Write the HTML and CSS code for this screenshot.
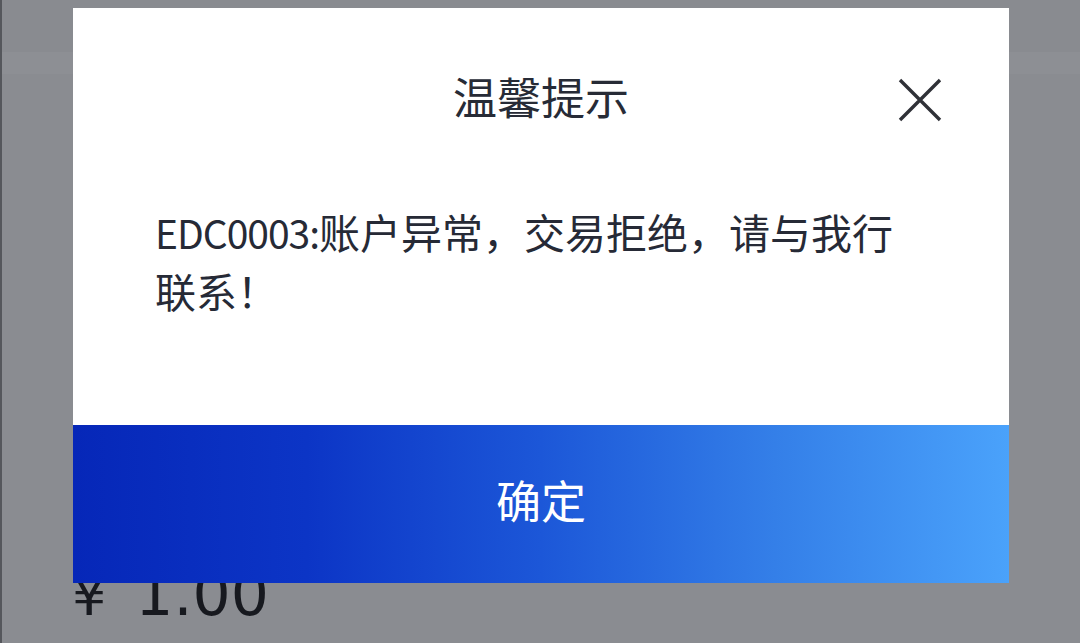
FILE: index.html
```html
<!DOCTYPE html>
<html lang="zh-CN">
<head>
<meta charset="utf-8">
<title>温馨提示</title>
<link rel="stylesheet" href="styles.css">
</head>
<body>
<div class="page">
  <div class="topbar"></div>
  <div class="amount"><span class="yen">¥</span><span class="num">1.00</span></div>
</div>
<div class="mask">
  <div class="dialog">
    <div class="dialog-head">
      <span></span>
      <h1 class="dialog-title">温馨提示</h1>
      <button class="dialog-close" aria-label="关闭">
        <svg width="44" height="44" viewBox="0 0 44 44"><path d="M2 2 L42 42 M42 2 L2 42" stroke="#2f3137" stroke-width="3.4" fill="none" stroke-linecap="butt"/></svg>
      </button>
    </div>
    <div class="dialog-body"><span class="code">EDC0003:</span>账户异常，交易拒绝，请与我行联系！</div>
    <button class="dialog-ok">确定</button>
  </div>
</div>
</body>
</html>
```

FILE: styles.css
```css
html, body {
  margin: 0;
  padding: 0;
}
body {
  width: 1080px;
  height: 643px;
  overflow: hidden;
  background: #8a8c91;
  font-family: "Noto Sans CJK SC", "Noto Sans", sans-serif;
  position: relative;
}
.page {
  height: 643px;
  border-left: 2px solid #55575c;
  box-sizing: border-box;
}
.topbar {
  height: 52px;
  border-bottom: 22px solid #8d8f94;
  background: #898b90;
}
.amount {
  margin-top: 490px;
  padding-left: 70px;
  height: 60px;
  line-height: 60px;
  font-family: "DejaVu Sans", sans-serif;
  font-size: 60px;
  color: #17191f;
  display: flex;
  align-items: baseline;
}
.yen {
  font-size: 54px;
  margin-right: 29px;
}
.num {
  font-weight: 400;
}
.mask {
  position: absolute;
  left: 0;
  top: 0;
  width: 1080px;
  height: 643px;
}
.dialog {
  margin: 8px 0 0 73px;
  width: 936px;
  height: 575px;
  background: #ffffff;
  display: flex;
  flex-direction: column;
}
.dialog-head {
  height: 182px;
  display: grid;
  grid-template-columns: 1fr auto 1fr;
  align-items: center;
}
.dialog-title {
  margin: 0 0 6px;
  font-size: 44px;
  font-weight: 400;
  color: #272b36;
  line-height: 1;
}
.dialog-close {
  justify-self: end;
  margin-right: 67px;
  margin-top: 2px;
  padding: 0;
  border: 0;
  background: none;
  width: 44px;
  height: 44px;
  display: flex;
}
.dialog-body {
  flex: 1;
  padding: 12px 104px 0 82px;
  font-size: 41px;
  line-height: 58px;
  color: #262a36;
}
.code {
  font-size: 39px;
  letter-spacing: -1px;
}
.dialog-ok {
  height: 158px;
  border: 0;
  margin: 0;
  padding: 0 0 10px;
  background: linear-gradient(90deg, #0627b8 0%, #0c35c6 25%, #1c57d8 50%, #347fe8 75%, #4aa2fb 100%);
  color: #ffffff;
  font-family: "Noto Sans CJK SC", "Noto Sans", sans-serif;
  font-size: 45px;
  line-height: 1;
}
```
